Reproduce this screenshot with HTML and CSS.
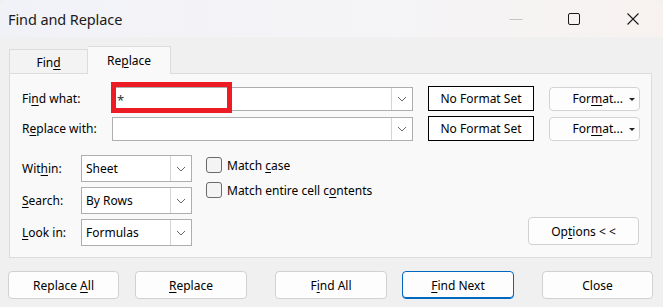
FILE: index.html
```html
<!DOCTYPE html>
<html>
<head>
<meta charset="utf-8">
<title>Find and Replace</title>
<link rel="stylesheet" href="styles.css">
</head>
<body>
<div class="window">
  <div class="titlebar">
    <span class="title">Find and Replace</span>
    <div class="controls">
      <span class="ctl ctl-min"><svg width="14" height="14" viewBox="0 0 14 14"><line x1="0.5" y1="7.5" x2="13.5" y2="7.5" stroke="#c4c4c4" stroke-width="1"/></svg></span>
      <span class="ctl ctl-max"><svg width="14" height="14" viewBox="0 0 14 14"><rect x="1.5" y="1.5" width="11" height="11" rx="1.5" fill="none" stroke="#1a1a1a" stroke-width="1"/></svg></span>
      <span class="ctl ctl-close"><svg width="14" height="14" viewBox="0 0 14 14"><path d="M1.5 1.5 L12.5 12.5 M12.5 1.5 L1.5 12.5" stroke="#1a1a1a" stroke-width="1.1" fill="none"/></svg></span>
    </div>
  </div>
  <div class="content">
    <div class="tabs">
      <div class="tab"><span>Fin<u>d</u></span></div>
      <div class="tab active"><span>Re<u>p</u>lace</span></div>
    </div>
    <div class="panel">
      <div class="row">
        <label class="lbl">Fi<u>n</u>d what:</label>
        <div class="combo">
          <span class="value">*</span>
          <span class="drop"><svg width="10" height="6" viewBox="0 0 10 6"><path d="M1 1 L5 5 L9 1" fill="none" stroke="#6a6a6a" stroke-width="1"/></svg></span>
          <span class="highlight"></span>
        </div>
        <div class="nfs"><span>No Format Set</span></div>
        <div class="fmt"><span>For<u>m</u>at...</span><span class="caret"></span></div>
      </div>
      <div class="row row2">
        <label class="lbl">R<u>e</u>place with:</label>
        <div class="combo">
          <span class="value"></span>
          <span class="drop"><svg width="10" height="6" viewBox="0 0 10 6"><path d="M1 1 L5 5 L9 1" fill="none" stroke="#6a6a6a" stroke-width="1"/></svg></span>
        </div>
        <div class="nfs"><span>No Format Set</span></div>
        <div class="fmt"><span>For<u>m</u>at...</span><span class="caret"></span></div>
      </div>
      <div class="options">
        <div class="selects">
          <div class="srow">
            <label class="slbl">Wit<u>h</u>in:</label>
            <div class="select"><span class="value">Sheet</span><span class="drop"><svg width="10" height="6" viewBox="0 0 10 6"><path d="M1 1 L5 5 L9 1" fill="none" stroke="#6a6a6a" stroke-width="1"/></svg></span></div>
          </div>
          <div class="srow">
            <label class="slbl"><u>S</u>earch:</label>
            <div class="select"><span class="value">By Rows</span><span class="drop"><svg width="10" height="6" viewBox="0 0 10 6"><path d="M1 1 L5 5 L9 1" fill="none" stroke="#6a6a6a" stroke-width="1"/></svg></span></div>
          </div>
          <div class="srow">
            <label class="slbl"><u>L</u>ook in:</label>
            <div class="select"><span class="value">Formulas</span><span class="drop"><svg width="10" height="6" viewBox="0 0 10 6"><path d="M1 1 L5 5 L9 1" fill="none" stroke="#6a6a6a" stroke-width="1"/></svg></span></div>
          </div>
        </div>
        <div class="checks">
          <div class="check"><span class="box"></span><span>Match <u>c</u>ase</span></div>
          <div class="check"><span class="box"></span><span>Match entire cell c<u>o</u>ntents</span></div>
        </div>
        <div class="opt-right">
          <div class="btn opt-btn"><span>Op<u>t</u>ions &lt; &lt;</span></div>
        </div>
      </div>
    </div>
    <div class="buttons">
      <div class="btn b1"><span>Replace <u>A</u>ll</span></div>
      <div class="btn b2"><span><u>R</u>eplace</span></div>
      <div class="btn b3"><span>F<u>i</u>nd All</span></div>
      <div class="btn b4 primary"><span><u>F</u>ind Next</span></div>
      <div class="btn b5"><span>Close</span></div>
    </div>
  </div>
</div>
</body>
</html>
```

FILE: styles.css
```css
* { box-sizing: border-box; }
html, body { margin: 0; padding: 0; }
body {
  width: 663px;
  height: 307px;
  overflow: hidden;
  background: #f0f0f0;
  font-family: "Segoe UI", "Noto Sans", "Open Sans", sans-serif;
  font-size: 12px;
  color: #000;
}
u { text-decoration: underline; text-underline-offset: 2px; text-decoration-thickness: 1px; }
.window { width: 663px; height: 307px; background: #f0f0f0; border-radius: 8px 8px 0 0; overflow: hidden; }

.titlebar {
  height: 37px;
  display: flex;
  align-items: center;
  justify-content: space-between;
  background: linear-gradient(90deg, #f1f2f8 0%, #f5f4f6 60%, #f7f2f0 100%);
  padding-left: 8px;
}
.title { font-size: 14.5px; color: #1a1a1a; letter-spacing: -0.1px; }
.controls { display: flex; align-items: center; height: 37px; }
.ctl { display: flex; align-items: center; justify-content: center; width: 58px; height: 37px; }
.ctl-close { width: 60px; }

.content { padding: 9px 0 0 9px; }

.tabs { display: flex; align-items: flex-end; height: 27px; }
.tab {
  height: 24px;
  width: 79px;
  border: 1px solid #dcdcdc;
  border-bottom: none;
  background: #f3f3f3;
  display: flex; align-items: center; justify-content: center;
  padding-top: 1px;
}
.tab.active {
  height: 28px;
  width: 83px;
  margin-bottom: -1px;
  background: #f9f9f9;
  border-left: none;
  position: relative;
  z-index: 1;
  padding-bottom: 1px;
}

.panel {
  width: 643px;
  height: 185px;
  background: #f9f9f9;
  border: 1px solid #dcdcdc;
  padding: 12px 11px 0 12px;
}

.row { display: flex; align-items: center; height: 25px; }
.row2 { margin-top: 5px; }
.lbl { width: 90px; }
.combo {
  position: relative;
  width: 301px;
  height: 24px;
  background: #fff;
  border: 1px solid #aeaeae;
  display: flex;
  align-items: center;
  justify-content: space-between;
}
.combo .value { padding-left: 4px; padding-top: 3px; font-size: 13px; color: #333; }
.drop {
  width: 21px;
  height: 22px;
  border-left: 1px solid #d4d4d4;
  background: #fff;
  display: flex; align-items: center; justify-content: center;
}
.highlight {
  position: absolute;
  left: -2px;
  top: -6px;
  width: 121px;
  height: 31px;
  border: 5px solid #ed1c24;
}
.nfs {
  margin-left: 15px;
  width: 106px;
  height: 25px;
  border: 1px solid #000;
  background: #fff;
  display: flex; align-items: center; justify-content: center;
}
.fmt {
  margin-left: 15px;
  width: 91px;
  height: 24px;
  border: 1px solid #d3d3d3;
  border-radius: 4px;
  background: #fdfdfd;
  display: flex; align-items: center; justify-content: flex-end;
  padding-right: 4px;
  gap: 6px;
}
.caret {
  width: 0; height: 0;
  border-left: 3px solid transparent;
  border-right: 3px solid transparent;
  border-top: 3px solid #222;
  margin-top: 1px;
}

.options { display: flex; margin-top: 14px; }
.selects { display: flex; flex-direction: column; gap: 5px; }
.srow { display: flex; align-items: center; height: 27px; }
.slbl { width: 59px; }
.select {
  width: 111px;
  height: 27px;
  background: #fff;
  border: 1px solid #aeaeae;
  display: flex; align-items: center; justify-content: space-between;
}
.select .value { padding-left: 4px; }
.select .drop { height: 25px; }

.checks { margin-left: 14px; padding-top: 2px; display: flex; flex-direction: column; gap: 9px; }
.check { display: flex; align-items: center; gap: 5px; height: 16px; }
.box {
  width: 16px; height: 16px;
  border: 1px solid #6b6b6b;
  border-radius: 3px;
  background: #f4f4f4;
}

.opt-right { flex: 1; display: flex; justify-content: flex-end; align-items: flex-end; padding-bottom: 1px; }

.btn {
  height: 28px;
  border: 1px solid #d1d1d1;
  border-radius: 4px;
  background: #fdfdfd;
  display: flex; align-items: center; justify-content: center;
}
.opt-btn { width: 111px; margin-right: 1px; }

.buttons { display: flex; margin-top: 13px; margin-left: -1px; }
.buttons .btn { width: 112px; }
.buttons .b1 { width: 111px; }
.b2 { margin-left: 16px; }
.b3 { margin-left: 28px; }
.b4 { margin-left: 15px; }
.buttons .b5 { margin-left: 28px; width: 111px; }
.primary { border: 1px solid #0067c0; box-shadow: inset 0 -1px 0 #0067c0; }
```
